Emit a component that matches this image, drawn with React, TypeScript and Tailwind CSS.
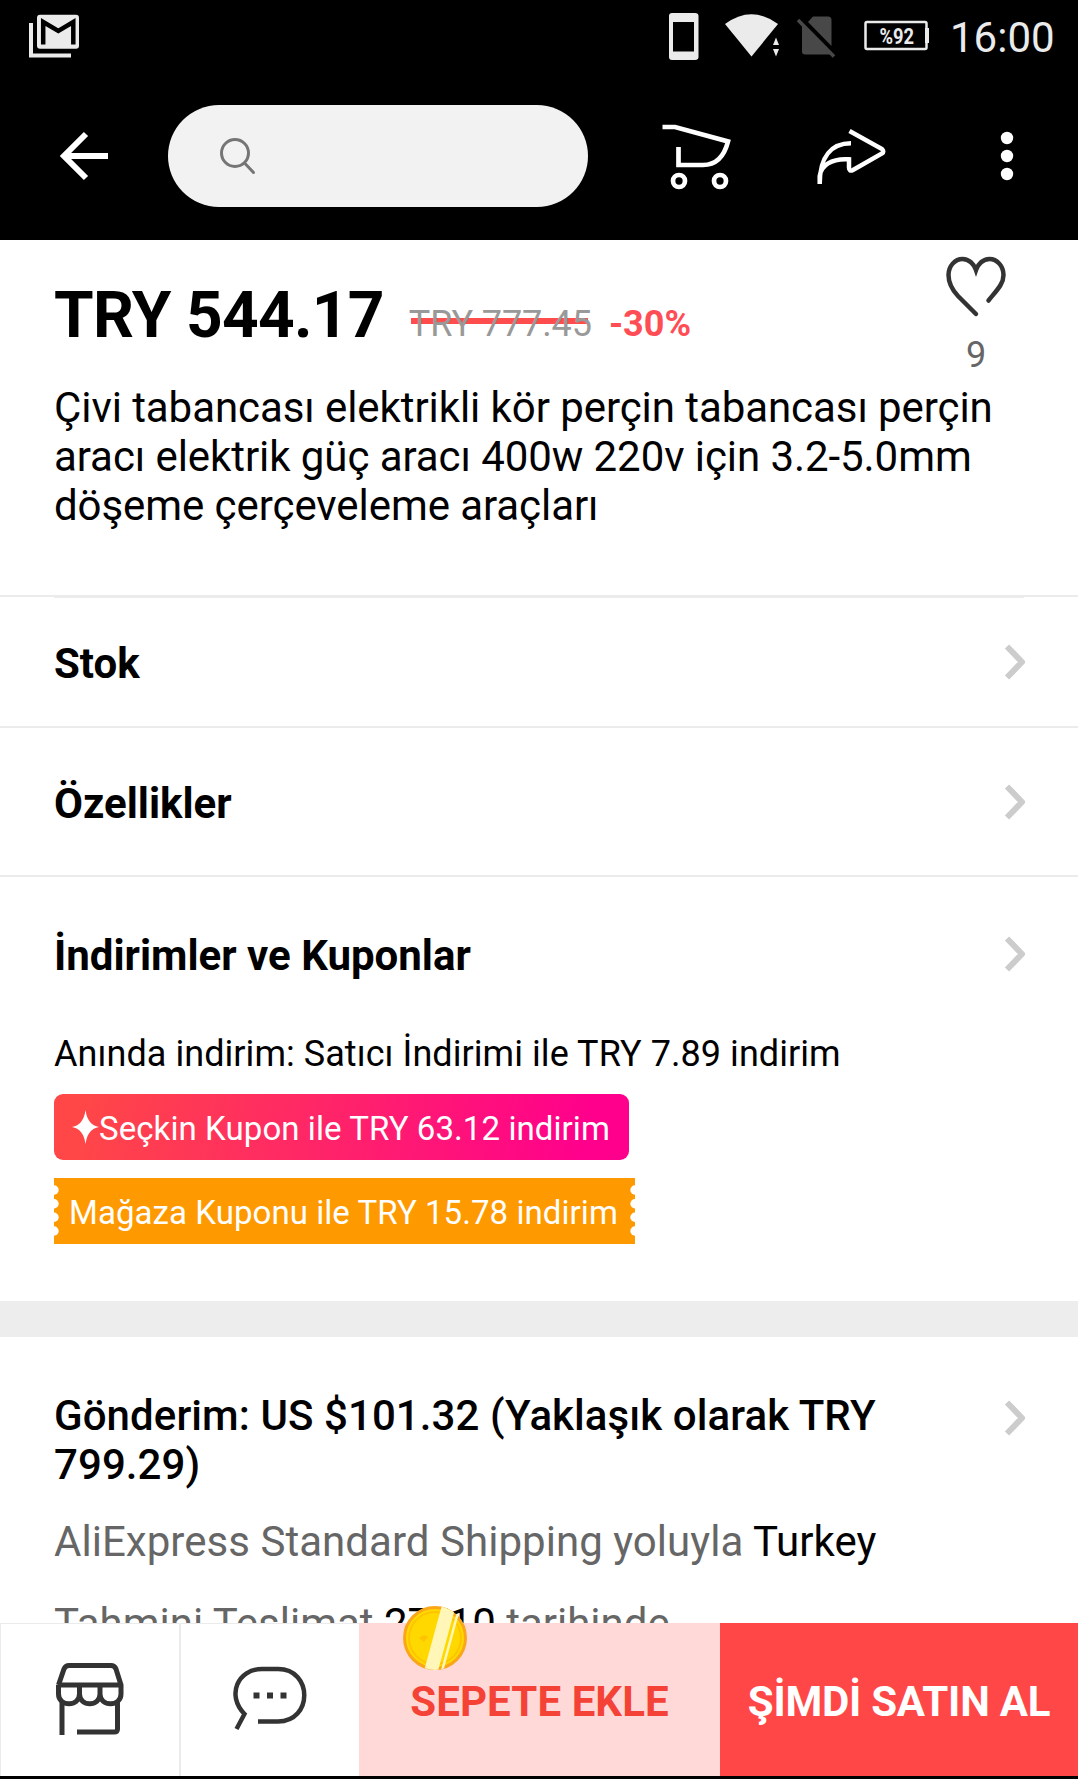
import type { ReactNode } from "react";

const Chevron = () => (
    <svg width="21" height="36" viewBox="0 0 21 36" fill="none" stroke="#cccccc" strokeWidth="6" className="shrink-0 overflow-visible">
        <path d="M2 2.500 L17 18 L2 33.500" strokeLinejoin="round" />
    </svg>
);

const StatusBar = () => (
    <div className="flex h-[72px] items-start">
        <svg width="52" height="44" viewBox="28 14 52 44" className="mt-3.5 ml-7">
            <path d="M31 23 V55.5 H71" fill="none" stroke="#ebebeb" strokeWidth="4" />
            <rect x="37" y="14.7" width="42" height="34" rx="3" fill="#ebebeb" />
            <path d="M43.2 44.5 V22 L58.3 31 L73.3 22 V44.5" fill="none" stroke="#000" strokeWidth="4.5" />
        </svg>
        <svg width="266" height="52" viewBox="664 10 266 52" className="mt-2.5 ml-[584px]">
            <path fillRule="evenodd" d="M672 13 H695 Q698.500 13 698.500 16 V57 Q698.500 60 695 60 H672 Q669 60 669 57 V16 Q669 13 672 13 Z M673 22 V51.500 H694 V22 Z" fill="#ebebeb" />
            <path d="M725 24 Q751.500 4.500 778 24 L751.500 56.500 Z" fill="#ebebeb" />
            <path d="M773 45 L776 37.500 L779 45 Z M773 49 L776 56.500 L779 49 Z" fill="#ebebeb" />
            <path d="M808 22 L813 16.500 H828 Q831.500 16.500 831.500 20 V46 Z" fill="#484848" />
            <path d="M802 24 L831 54 Q830 54.500 828 54.500 H805 Q802 54.500 802 51.500 Z" fill="#484848" />
            <path d="M798 20 L834 56.500" stroke="#484848" strokeWidth="3.500" />
            <rect x="865.500" y="22" width="61" height="27" rx="1.500" fill="none" stroke="#ebebeb" strokeWidth="2.500" />
            <rect x="925" y="28" width="4" height="15" fill="#ebebeb" />
            <text x="879.500" y="43.500" textLength="34.500" lengthAdjust="spacingAndGlyphs" fontSize="22" fontWeight="700" fill="#ebebeb" fontFamily="Roboto">%92</text>
        </svg>
        <span className="mt-[13px] ml-5 text-[42px] leading-[49px] text-[#ebebeb]">16:00</span>
    </div>
);

const NavBar = () => (
    <div className="flex h-[168px] items-center">
        <svg width="50" height="50" viewBox="59 131 50 50" fill="none" stroke="#fff" strokeWidth="6" className="ml-[59px]">
            <path d="M108 156 H65 M86 134 L64 156 L86 178" />
        </svg>
        <div className="ml-[59px] flex h-[102px] w-[420px] items-center rounded-full bg-[#f2f2f2] pl-[51px]">
            <svg width="38" height="38" viewBox="219 136 38 38" fill="none" stroke="#757575" strokeWidth="3" strokeLinecap="round">
                <circle cx="235" cy="152" r="13.500" />
                <path d="M245 162.500 L253.500 171.500" />
            </svg>
        </div>
        <svg width="70" height="68" viewBox="661 122 70 68" fill="none" stroke="#fff" strokeWidth="4.700" className="ml-[73px]">
            <path d="M662.500 127 H675 L728 141.500 Q722 165 703 165 H678.500 V147" />
            <circle cx="679" cy="181" r="6" />
            <circle cx="720" cy="181" r="6" />
        </svg>
        <svg width="70" height="58" viewBox="817 127 70 58" fill="none" stroke="#fff" strokeWidth="4.500" className="ml-[85px]">
            <path d="M852 143.300 C833 143.300 820.700 156 820.700 184 V176 C822 166 832 158 850 159.300 V167.500 Q850 172 854 170 L883 153.500 Q885.500 151.500 883 149 L850.500 131" />
        </svg>
        <svg width="14" height="50" viewBox="1001 131 14 50" fill="#fff" className="ml-[114px]">
            <circle cx="1008" cy="138" r="6.200" />
            <circle cx="1008" cy="156" r="6.200" />
            <circle cx="1008" cy="174" r="6.200" />
        </svg>
    </div>
);

const Row = ({ title, className }: { title: string; className: string }) => (
    <div className={`flex items-center justify-between pr-[52px] pl-[54px] ${className}`}>
        <h2 className="pt-[3px] text-[42px] leading-[49px] font-bold">{title}</h2>
        <Chevron />
    </div>
);

const Notches = ({ side }: { side: "left" | "right" }) => (
    <svg width="5" height="66" viewBox="0 0 5 66" fill="#fff">
        {[12, 25.7, 39.3, 53].map((y) => (
            <circle key={y} cx={side === "left" ? 0 : 5} cy={y} r="4.700" />
        ))}
    </svg>
);

const Tab = ({ children }: { children: ReactNode }) => (
    <button className="flex h-full w-[180px] items-center justify-center border-t border-l-2 border-[#ebebeb] bg-white pb-0.5 first:w-[179px] first:border-l">
        {children}
    </button>
);

const BottomBar = () => (
    <div className="relative flex h-[156px] shrink-0 border-b-[3px] border-black">
        <Tab>
            <svg width="70" height="74" viewBox="55 1662 70 74" fill="none" stroke="#333" strokeWidth="5">
                <path d="M58.500 1685 L64 1669 Q65.500 1665.500 69 1665.500 H111 Q114.500 1665.500 116 1669 L121 1685 V1694 C121 1707 100 1707 100 1694 V1685 M58.500 1685 H121 M58.500 1685 V1694 C58.500 1707 79.500 1707 79.500 1694 V1685 M79.500 1694 C79.500 1707 100 1707 100 1694" />
                <path d="M62 1702 V1735 M117.500 1702 V1729 Q117.500 1732 114 1732 H77" />
            </svg>
        </Tab>
        <Tab>
            <svg width="74" height="66" viewBox="233 1667 74 66" fill="none" stroke="#333" strokeWidth="4.500">
                <path d="M236.500 1730 L244.500 1715 C226 1696 238 1670 262 1670 H278 C313 1670 313 1722.500 278 1722.500 H258" />
                <path d="M253.500 1696.500 H259.500 M267 1696.500 H273 M280.500 1696.500 H286.500" strokeWidth="6" />
            </svg>
        </Tab>
        <button className="w-[361px] bg-[#ffd9d7] pt-1 text-[42px] font-bold tracking-[0.1px] text-[#f44336]">SEPETE EKLE</button>
        <button className="w-[358px] bg-[#ff4747] pt-1 text-[42px] font-bold tracking-[-0.25px] text-white">ŞİMDİ SATIN AL</button>
        <svg width="66" height="66" viewBox="0 0 66 66" className="absolute -top-[18px] left-[402px]">
            <defs>
                <clipPath id="coin">
                    <circle cx="33" cy="33" r="32" />
                </clipPath>
            </defs>
            <circle cx="33" cy="33" r="30.500" fill="#ffd800" stroke="#f9a61a" strokeWidth="3" />
            <circle cx="33" cy="33" r="26" fill="none" stroke="#ffc400" strokeWidth="2" />
            <path d="M17 33 Q22 28 26 32 L22 37 Z" fill="#ffc400" />
            <g clipPath="url(#coin)">
                <path d="M40 0 H54 L36 66 H22 Z" fill="#fff6b8" />
                <path d="M58 0 L40 66" stroke="#fff6b8" strokeWidth="2.500" />
            </g>
        </svg>
    </div>
);

export default function App() {
    return (
        <div className="flex h-[1779px] w-[1078px] flex-col overflow-hidden bg-white font-['Roboto',sans-serif] text-black">
            <header className="h-60 shrink-0 bg-black">
                <StatusBar />
                <NavBar />
            </header>

            <main className="min-h-0 flex-1 overflow-hidden">
                <section className="flex h-[355px] justify-between pl-[54px]">
                    <div>
                        <div className="mt-[38px] flex h-[75px] items-baseline">
                            <span className="text-[64px] leading-[75px] font-bold tracking-[-0.7px]">TRY 544.17</span>
                            <span className="relative -top-px ml-[25px] text-[36px] tracking-[-0.1px] text-[#999]">
                                <span className="absolute top-[21px] left-0.5 h-[6px] w-[177px] bg-[#ff4d4d]" />
                                <span className="relative">TRY 777.45</span>
                            </span>
                            <span className="relative -top-px ml-[17px] text-[36px] font-bold text-[#ff4d55]">-30%</span>
                        </div>
                        <p className="mt-[30px] w-[950px] text-[42px] leading-[49px] tracking-[-0.07px]">
                            Çivi tabancası elektrikli kör perçin tabancası perçin aracı elektrik güç aracı 400w 220v için 3.2-5.0mm döşeme çerçeveleme araçları
                        </p>
                    </div>
                    <div className="mr-[70px] -ml-24 flex w-[64px] flex-col items-center pt-[15px]">
                        <svg width="64" height="64" viewBox="944 255 64 64" fill="none" stroke="#333" strokeWidth="4.500" strokeLinecap="round">
                            <path d="M976 314 L958 296 C951 288.500 948.500 282 948.500 275 C948.500 266 955 259 962.500 259 C969 259 974 264 976 270 C978 264 983 259 989.500 259 C997 259 1003.500 266 1003.500 275 C1003.500 284 997 290 988.500 300.500" />
                        </svg>
                        <span className="mt-[15px] text-[36px] leading-[42px] text-[#666]">9</span>
                    </div>
                </section>

                <div className="h-[3px] border-t-2 border-[#ebebeb] px-[54px]">
                    <div className="h-px bg-[#ebebeb]" />
                </div>
                <Row title="Stok" className="h-[128px]" />
                <Row title="Özellikler" className="h-[149px] border-t-2 border-[#ebebeb]" />
                <Row title="İndirimler ve Kuponlar" className="h-[156px] border-t-2 border-[#ebebeb]" />

                <section className="flex h-[270px] flex-col items-start pt-0.5 pl-[54px]">
                    <p className="text-[36px] leading-[42px] tracking-[0.06px]">Anında indirim: Satıcı İndirimi ile TRY 7.89 indirim</p>
                    <div className="mt-[19px] flex h-[66px] w-[575px] items-center rounded-[9px] bg-[linear-gradient(100deg,#ff4747_5%,#ff008c_92%)] pl-[18px] text-white">
                        <svg width="27" height="34" viewBox="0 0 27 34" fill="currentColor">
                            <path d="M13.500 0 Q15.500 15 27 17 Q15.500 19 13.500 34 Q11.500 19 0 17 Q11.500 15 13.500 0 Z" />
                        </svg>
                        <span className="pt-0.5 text-[33px] leading-[39px] tracking-[0.08px]">Seçkin Kupon ile TRY 63.12 indirim</span>
                    </div>
                    <div className="mt-[18px] flex h-[66px] w-[581px] items-center justify-between bg-[#ff9900] text-white">
                        <Notches side="left" />
                        <span className="pt-0.5 pr-0.5 text-[33px] leading-[39px] tracking-[0.06px]">Mağaza Kuponu ile TRY 15.78 indirim</span>
                        <Notches side="right" />
                    </div>
                </section>

                <div className="h-9 bg-[#ededed]" />

                <section className="pr-[52px] pl-[54px]">
                    <div className="flex items-start justify-between pt-[54px]">
                        <h2 className="w-[860px] text-[42px] leading-[49px] font-medium tracking-[0.08px]">
                            Gönderim: US $101.32 (Yaklaşık olarak TRY 799.29)
                        </h2>
                        <div className="pt-[9px]">
                            <Chevron />
                        </div>
                    </div>
                    <p className="mt-7 text-[42px] leading-[49px] tracking-[0.04px] text-[#666]">
                        AliExpress Standard Shipping yoluyla <span className="text-black">Turkey</span>
                    </p>
                    <p className="mt-[33px] text-[42px] leading-[49px] text-[#666]">
                        Tahmini Teslimat <span className="text-black">27/10</span> tarihinde
                    </p>
                </section>
            </main>

            <BottomBar />
        </div>
    );
}
